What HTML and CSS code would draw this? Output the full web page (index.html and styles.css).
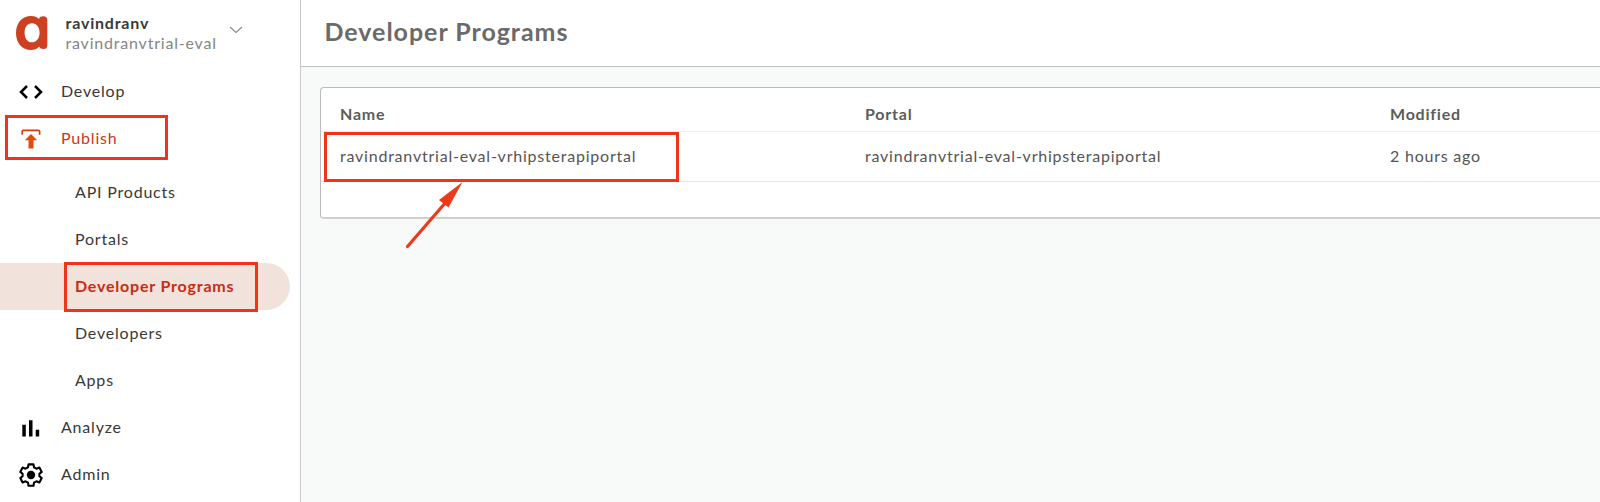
FILE: index.html
```html
<!DOCTYPE html>
<html lang="en">
<head>
<meta charset="utf-8">
<title>Developer Programs</title>
<link rel="stylesheet" href="styles.css">
</head>
<body>
<div class="app">
  <aside class="sidebar">
    <header class="account">
      <svg class="logo" width="32" height="36" viewBox="0 0 32 36"><path fill="#cd4120" fill-rule="evenodd" d="M15 1C19 1 21 2 23 4C23.500 2 25 1.300 27 1.300C30 1.300 31.300 2.500 31.300 5V30C31.300 33 30 34 27.500 34C25 34 23.800 33.200 23.200 31.500C21 34 18.500 35 15 35C6 35 0 28 0 18S6 1 15 1ZM16 8.300C11.500 8.300 8.600 12 8.600 17.700S11.500 27.300 16 27.300S23.600 23.200 23.600 17.700S20.500 8.300 16 8.300Z"/></svg>
      <div class="who">
        <div class="user">ravindranv</div>
        <div class="org">ravindranvtrial-eval</div>
      </div>
      <svg class="chevron" width="14" height="8" viewBox="0 0 14 8"><path fill="none" stroke="#8c8c8c" stroke-width="1.200" d="M1 1L7 6.500L13 1"/></svg>
    </header>
    <nav>
      <a class="item"><svg class="icon" width="24" height="24" viewBox="0 0 24 24"><path fill="none" stroke="#000" stroke-width="2.500" d="M8 6L2 12L8 18M16 6L22 12L16 18"/></svg><span class="label">Develop</span></a>
      <a class="item active"><svg class="icon" width="24" height="24" viewBox="0 0 24 24"><path fill="none" stroke="#dc3a14" stroke-width="1.700" d="M3.200 7.700V4.500Q3.200 3.400 4.300 3.400H19.500Q20.600 3.400 20.600 4.500V7.700"/><path fill="#e04a0c" d="M12 7L18.200 13.300H14.500V21.500H9.500V13.300H5.800Z"/></svg><span class="label">Publish</span><span class="mark mark-publish"></span></a>
      <div class="sub">
        <a class="item"><span class="label">API Products</span></a>
        <a class="item"><span class="label">Portals</span></a>
        <a class="item current"><span class="label">Developer Programs</span><span class="mark mark-current"></span></a>
        <a class="item"><span class="label">Developers</span></a>
        <a class="item"><span class="label">Apps</span></a>
      </div>
      <a class="item"><svg class="icon" width="24" height="24" viewBox="0 0 24 24"><path d="M3.300 8.700H6.800V20.500H3.300ZM10 4.300H13.500V20.500H10ZM16.700 13.700H20.200V20.500H16.700Z"/></svg><span class="label">Analyze</span></a>
      <a class="item"><svg class="icon" width="24" height="24" viewBox="0 0 24 24"><path fill="none" stroke="#000" stroke-width="2.100" stroke-linejoin="round" d="M9.500 1.400H14.500L15 4.300L17.500 5.700L20.400 4.600L22.700 8.900L20.400 10.800V13.200L22.700 15.100L20.400 19.400L17.500 18.300L15 19.700L14.500 22.800H9.500L9 19.700L6.500 18.300L3.600 19.400L1.300 15.100L3.600 13.200V10.800L1.300 8.900L3.600 4.600L6.500 5.700L9 4.300Z"/><circle cx="12" cy="12" r="4.200"/></svg><span class="label">Admin</span></a>
    </nav>
  </aside>
  <main class="main">
    <header class="title-bar"><h1>Developer Programs</h1></header>
    <section class="card">
      <div class="row head"><span>Name</span><span>Portal</span><span>Modified</span></div>
      <div class="row"><span>ravindranvtrial-eval-vrhipsterapiportal</span><span>ravindranvtrial-eval-vrhipsterapiportal</span><span>2 hours ago</span><i class="mark mark-name"></i>
        <svg class="arrow" width="60" height="70" viewBox="0 0 60 70"><path fill="none" stroke="#ee3a1c" stroke-width="3.200" stroke-linecap="round" d="M2.500 65.500L41 21"/><path fill="#ee3a1c" d="M57.500 1L34 19L43.500 26.500Z"/></svg>
      </div>
    </section>
  </main>
</div>
</body>
</html>
```
FILE: styles.css
```css
* { box-sizing: border-box; }
body { margin: 0; font-family: Lato, "Liberation Sans", sans-serif; font-size: 16px; letter-spacing: 0.8px; color: #383838; background: #fff; }
.app { display: flex; height: 502px; overflow: hidden; }
.sidebar { width: 301px; border-right: 1px solid #c8caca; flex: none; background: #fff; }
.account { display: flex; height: 68px; padding: 13px 0 0 16px; }
.logo { margin-top: 2px; flex: none; }
.who { margin-left: 17.500px; line-height: 20px; }
.user { font-weight: 700; color: #3a3a3a; }
.org { color: #868686; }
.chevron { margin: 13px 0 0 12.500px; }
.item { display: flex; align-items: center; position: relative; height: 47px; padding-left: 18.700px; }
.icon { margin-right: 18.300px; flex: none; }
.label { padding-bottom: 2px; }
.active { color: #cc3520; }
.sub { padding-top: 7px; }
.sub .item { padding-left: 75px; }
.sub .current { width: 290px; background: #f1e2dc; border-radius: 0 24px 24px 0; color: #cc2a12; font-weight: 700; }
.mark { position: absolute; border: 3px solid #ef3518; }
.mark-publish { left: 5px; top: 0; width: 163px; height: 45px; }
.mark-current { left: 64px; top: -1px; width: 194px; height: 50px; }
.main { flex: 1; min-width: 0; background: #f8faf9; overflow: hidden; }
.title-bar { height: 67px; background: #fff; border-bottom: 1px solid #bfc1c1; padding-left: 23.500px; }
h1 { margin: 0; font-size: 25px; font-weight: 700; line-height: 62px; letter-spacing: 0.97px; color: #6a6a6a; }
.card { margin: 20px 0 0 19px; width: 1300px; height: 132px; background: #fff; border: 1px solid #b9bbbb; border-bottom: 2px solid #cfd1d1; border-radius: 4px; }
.row { position: relative; display: grid; grid-template-columns: 525px 525px 1fr; align-items: center; height: 50px; padding: 0 0 3px 19px; border-bottom: 1px solid #e4e5e5; color: #555; letter-spacing: 0.78px; }
.head { height: 44px; padding: 8px 0 0 19px; font-weight: 700; color: #5c5c5c; border-color: #eee; }
.mark-name { left: 3px; top: 0; width: 355px; height: 50px; }
.arrow { position: absolute; left: 83.500px; top: 49px; }
```
